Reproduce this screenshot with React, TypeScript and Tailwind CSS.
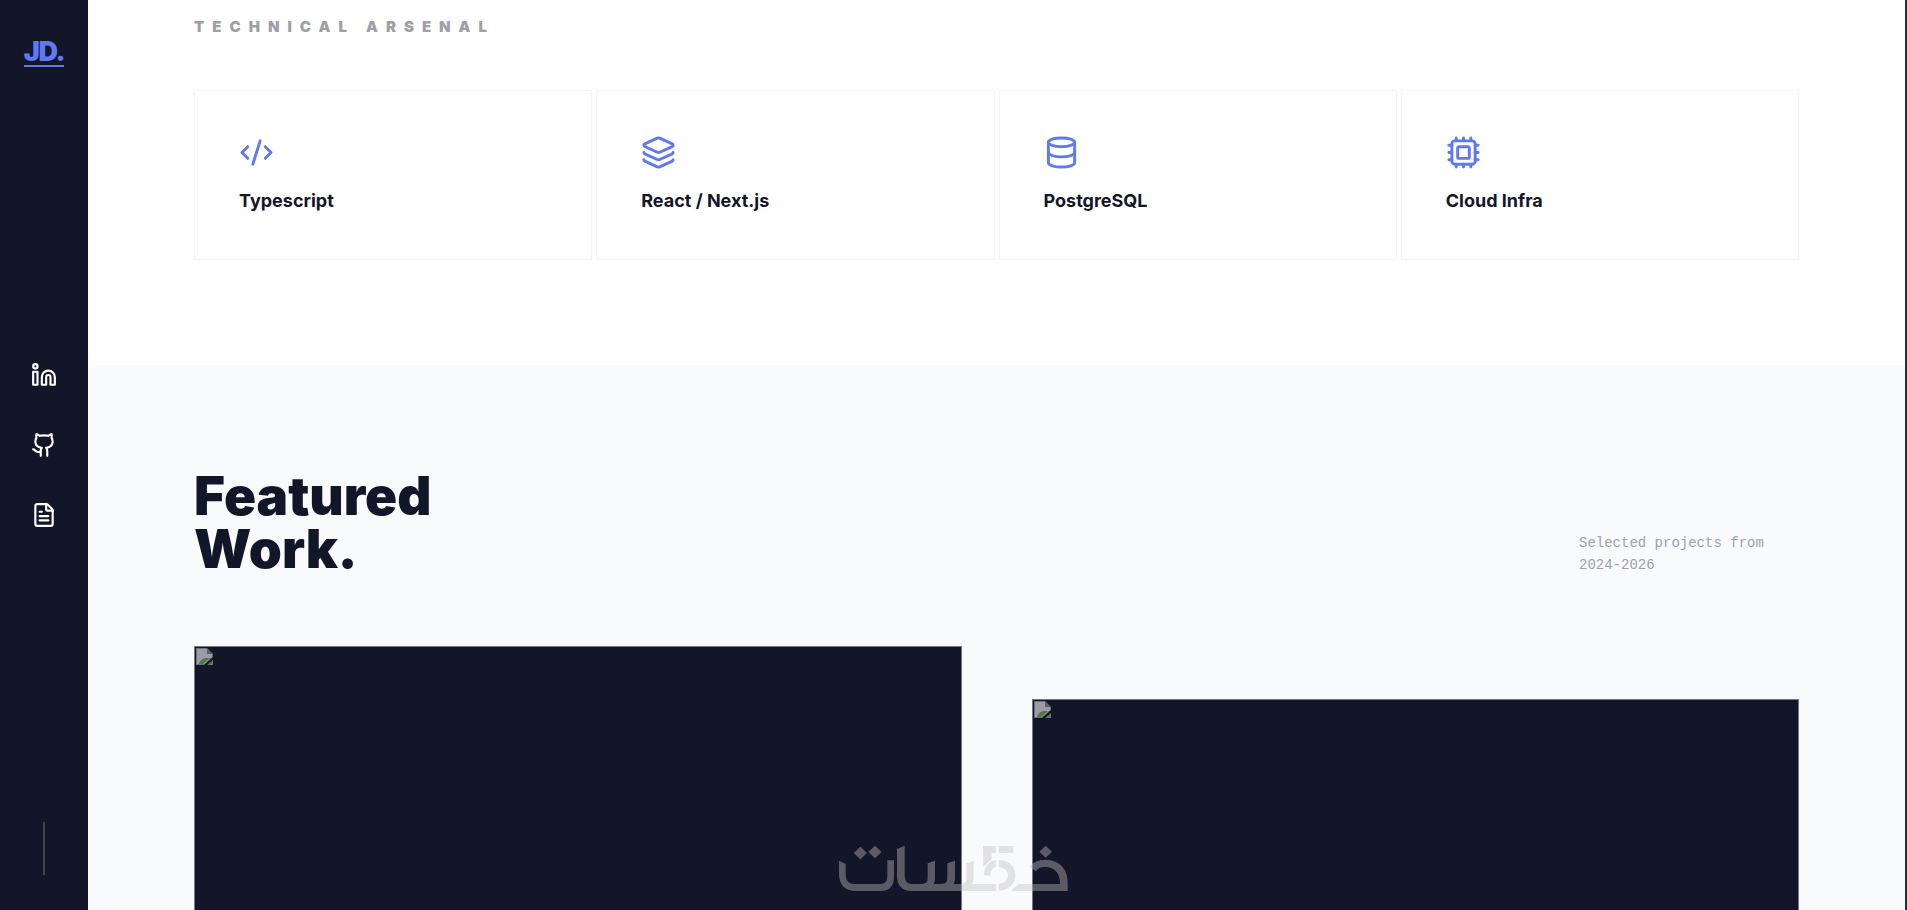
import { CodeXml, Cpu, Database, FileText, Github, Layers, Linkedin } from 'lucide-react';

const skills = [
    { name: 'Typescript', icon: CodeXml },
    { name: 'React / Next.js', icon: Layers },
    { name: 'PostgreSQL', icon: Database },
    { name: 'Cloud Infra', icon: Cpu },
];

const socials = [
    { label: 'LinkedIn', icon: Linkedin },
    { label: 'GitHub', icon: Github },
    { label: 'Resume', icon: FileText },
];

function Sidebar() {
    return (
        <aside className="sticky top-0 flex h-screen w-[88px] shrink-0 flex-col items-center justify-between bg-[#131628] py-[35px]">
            <a
                href="#top"
                className="border-b-2 border-[#6078f2] pt-1 text-[27px] leading-[26px] font-black tracking-tighter text-[#6078f2]"
            >
                JD.
            </a>
            <nav className="flex flex-col gap-11 text-white">
                {socials.map(({ label, icon: Icon }) => (
                    <a key={label} href={`#${label.toLowerCase()}`} aria-label={label}>
                        <Icon size={26} />
                    </a>
                ))}
            </nav>
            <div className="h-[53px] w-0.5 bg-[#42424c]" />
        </aside>
    );
}

// Placeholder glyph for a project without a cover
function MissingImage() {
    return (
        <svg width="17" height="17" viewBox="0 0 17 17" aria-hidden="true">
            <path d="M0 0h11l6 6v3L8 17H0z" fill="#70707c" />
            <path d="M1 1h10v5h5v3l-8 7H1z" fill="#9c9ca8" />
            <path d="M11 1l5 5h-5z" fill="#5c5c68" />
            <path d="M3 16c1-4 4-6 8-6l3 0-7 6z" fill="#4f7a3d" />
            <path d="M11 17l6-5v5z" fill="#6d7670" />
            <path d="M13 16l3-3v3z" fill="#4f7a3d" />
        </svg>
    );
}

function Watermark() {
    return (
        <svg
            className="pointer-events-none fixed inset-x-0 bottom-[19px] mx-auto"
            width="229"
            height="46"
            viewBox="117 105 687 138"
            aria-hidden="true"
        >
            <g fill="#c3c0c0" opacity="0.41">
                <path d="M117 152L137 162V195Q137 222 165 222H240Q262 222 262 200V151H282V200Q282 243 240 243H168Q117 243 117 190Z" />
                <path d="M181 110l20 19-20 19-20-19zM225 107l20 19-20 19-20-19zM737 107l19 18-19 18-19-18z" />
                <path d="M291 117L314 107V196Q314 222 335 222H365Q383 222 383 205V160L405 152V205Q405 215 401 222H425Q442 222 442 205V160L465 152V205Q465 215 461 222H482Q499 222 499 205V160L521 153V205Q521 216 516 222H588V243H335Q291 243 291 196Z" />
                <path d="M549 108H588V129H575V148L550 170Z" />
                <path d="M596 108H640V129H596Z" />
                <path d="M551 196Q555 155 588 150V171Q572 175 571 197Z" />
                <path d="M596 150Q646 154 646 197Q644 236 596 243V222Q624 216 624 196Q622 174 596 171Z" />
                <path d="M655 222H780Q780 172 735 171Q715 171 708 184L688 170Q702 150 737 149Q803 152 803 222V243H632Z" />
            </g>
        </svg>
    );
}

function ProjectCard({ className = '' }: { className?: string }) {
    return (
        <article className={`h-[528px] border border-[#747883] bg-[#131628] p-px ${className}`}>
            <MissingImage />
        </article>
    );
}

export default function App() {
    return (
        <div id="top" className="flex h-screen overflow-hidden bg-white font-['Inter',sans-serif] text-[#131628]">
            <Sidebar />
            <main className="min-w-0 flex-1 border-r-2 border-[#2c2c34]">
                <section className="px-[106px] pt-4 pb-[105px]">
                    <h2 className="mb-[53px] text-[15px] leading-[21px] font-black tracking-[8px] text-[#9f9fa9] uppercase">
                        Technical Arsenal
                    </h2>
                    <div className="grid grid-cols-4 gap-1">
                        {skills.map(({ name, icon: Icon }) => (
                            <div key={name} className="border border-[#f4f4f5] p-11">
                                <Icon size={35} className="mb-4 text-[#6078f2]" />
                                <h3 className="text-[18px] leading-[29px] font-bold">{name}</h3>
                            </div>
                        ))}
                    </div>
                </section>
                <section className="bg-[#f9fafc] px-[106px] pt-[105px] pb-[106px]">
                    <div className="mb-[70px] flex items-end justify-between">
                        <h2 className="text-[53px] leading-[53px] font-black">
                            Featured
                            <br />
                            Work.
                        </h2>
                        <p className="w-[220px] font-['Liberation_Mono',monospace] text-[14px] leading-[22px] text-[#9f9fa9]">
                            Selected projects from 2024-2026
                        </p>
                    </div>
                    <div className="grid grid-cols-2 gap-[70px]">
                        <ProjectCard />
                        <ProjectCard className="mt-[53px]" />
                    </div>
                </section>
            </main>
            <Watermark />
        </div>
    );
}
